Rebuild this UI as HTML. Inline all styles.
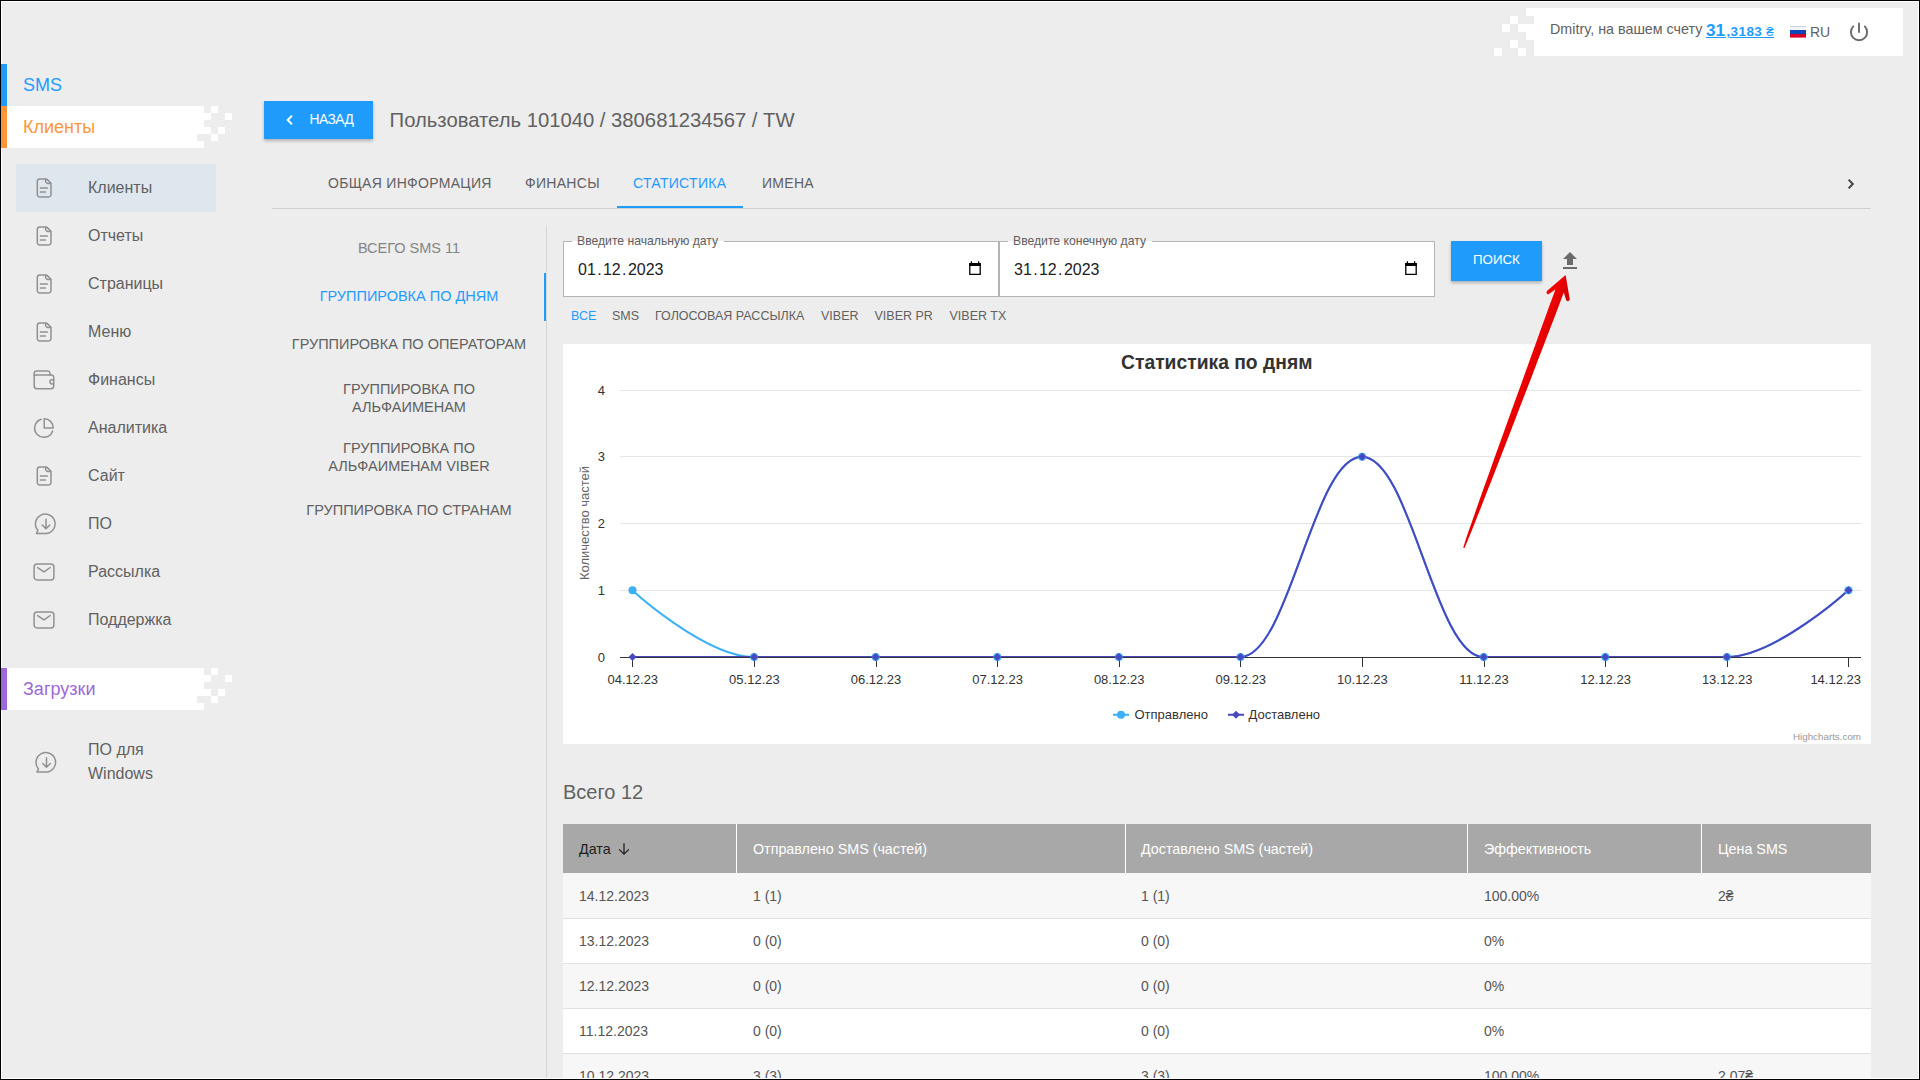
<!DOCTYPE html>
<html><head><meta charset="utf-8">
<style>
*{box-sizing:border-box;margin:0;padding:0}
html,body{width:1920px;height:1080px;overflow:hidden}
body{background:#ededed;font-family:"Liberation Sans",sans-serif;position:relative;color:#616161}
.a{position:absolute;white-space:nowrap}
.t{position:absolute;white-space:nowrap;height:20px;line-height:20px}
.frame{position:absolute;left:0;top:0;width:1920px;height:1080px;border:1px solid #000;pointer-events:none;z-index:50}
.wl{position:absolute;background:#fff;z-index:49}
.px{position:absolute;background:#fff}
.nav{font-size:16px;color:#616161;left:88px}
.ico{position:absolute;left:28px;width:32px;height:32px}
.tab{font-size:14px;letter-spacing:0.3px;color:#616161}
.vt{font-size:14.5px;color:#616161;text-align:center;width:276px;left:271px}
.chip{font-size:12.5px;color:#616161}
.th{font-size:14.3px;color:#fff}
.td{font-size:14px;color:#555}
.dt{margin:0 1.35px}
</style></head><body>
<div class="frame"></div>
<div class="wl" style="left:1px;top:1px;width:1918px;height:1px"></div>
<div class="wl" style="left:1918px;top:1px;width:1px;height:1078px"></div>
<div class="wl" style="left:1px;top:1078px;width:1918px;height:1px"></div>
<div class="a" style="left:1px;top:1px;width:1px;height:1078px;background:#fff"></div>

<!-- ===== SIDEBAR ===== -->
<div class="a" style="left:1px;top:64px;width:6px;height:42px;background:#1f9bfc"></div>
<div class="t" style="left:23px;top:74.75px;font-size:18px;color:#1f9bfc">SMS</div>
<div class="a" style="left:1px;top:106px;width:6px;height:42px;background:#ff973a"></div>
<div class="a" style="left:7px;top:106px;width:197px;height:42px;background:#fff"></div>
<div class="px" style="left:204px;top:113px;width:7px;height:7px"></div>
<div class="px" style="left:204px;top:127px;width:7px;height:7px"></div>
<div class="px" style="left:197px;top:134px;width:7px;height:7px;background:#ededed"></div>
<div class="px" style="left:211px;top:106px;width:7px;height:7px"></div>
<div class="px" style="left:225px;top:113px;width:7px;height:7px"></div>
<div class="px" style="left:218px;top:127px;width:7px;height:7px"></div>
<div class="px" style="left:211px;top:134px;width:7px;height:7px"></div>
<div class="t" style="left:23px;top:116.5px;font-size:18px;color:#ff973a">Клиенты</div>

<div class="a" style="left:16px;top:164px;width:200px;height:48px;background:#dfe7ee"></div>

<div class="t nav" style="top:177.3px;margin-top:0.5px">Клиенты</div>
<div class="t nav" style="top:225.3px;margin-top:0.5px">Отчеты</div>
<div class="t nav" style="top:273.3px;margin-top:0.5px">Страницы</div>
<div class="t nav" style="top:321.3px;margin-top:0.5px">Меню</div>
<div class="t nav" style="top:369.3px;margin-top:0.5px">Финансы</div>
<div class="t nav" style="top:417.3px;margin-top:0.5px">Аналитика</div>
<div class="t nav" style="top:465.3px;margin-top:0.5px">Сайт</div>
<div class="t nav" style="top:513.3px;margin-top:0.5px">ПО</div>
<div class="t nav" style="top:561.3px;margin-top:0.5px">Рассылка</div>
<div class="t nav" style="top:609.3px;margin-top:0.5px">Поддержка</div>

<div class="a" style="left:1px;top:668px;width:6px;height:42px;background:#9d68d8"></div>
<div class="a" style="left:7px;top:668px;width:197px;height:42px;background:#fff"></div>
<div class="px" style="left:204px;top:675px;width:7px;height:7px"></div>
<div class="px" style="left:204px;top:689px;width:7px;height:7px"></div>
<div class="px" style="left:197px;top:696px;width:7px;height:7px;background:#ededed"></div>
<div class="px" style="left:211px;top:668px;width:7px;height:7px"></div>
<div class="px" style="left:225px;top:675px;width:7px;height:7px"></div>
<div class="px" style="left:218px;top:689px;width:7px;height:7px"></div>
<div class="px" style="left:211px;top:696px;width:7px;height:7px"></div>
<div class="t" style="left:23px;top:678.5px;font-size:18px;color:#9d68d8">Загрузки</div>

<div class="t nav" style="top:739.3px;margin-top:0.5px">ПО для</div>
<div class="t nav" style="top:763.5px;margin-top:0.5px">Windows</div>

<!--ICONS-->
<svg class="a" style="left:0;top:0" width="240" height="800" viewBox="0 0 240 800" fill="none" stroke="#919191" stroke-width="1.5" stroke-linecap="round" stroke-linejoin="round">
<g transform="translate(28 170)"><path d="M17.8 8.9H11.8A2.5 2.5 0 0 0 9.3 11.4V24.4A2.5 2.5 0 0 0 11.8 26.9H20.5A2.5 2.5 0 0 0 23 24.4V14.3Q23 13.3 22.3 12.6L19.3 9.6Q18.6 8.9 17.8 8.9Z"/><path d="M17.6 9.2V11.1A2.4 2.4 0 0 0 20 13.5H22.8"/><path d="M12.4 17.9H19.4M12.4 21.9H17.4"/></g>
<g transform="translate(28 218)"><path d="M17.8 8.9H11.8A2.5 2.5 0 0 0 9.3 11.4V24.4A2.5 2.5 0 0 0 11.8 26.9H20.5A2.5 2.5 0 0 0 23 24.4V14.3Q23 13.3 22.3 12.6L19.3 9.6Q18.6 8.9 17.8 8.9Z"/><path d="M17.6 9.2V11.1A2.4 2.4 0 0 0 20 13.5H22.8"/><path d="M12.4 17.9H19.4M12.4 21.9H17.4"/></g>
<g transform="translate(28 266)"><path d="M17.8 8.9H11.8A2.5 2.5 0 0 0 9.3 11.4V24.4A2.5 2.5 0 0 0 11.8 26.9H20.5A2.5 2.5 0 0 0 23 24.4V14.3Q23 13.3 22.3 12.6L19.3 9.6Q18.6 8.9 17.8 8.9Z"/><path d="M17.6 9.2V11.1A2.4 2.4 0 0 0 20 13.5H22.8"/><path d="M12.4 17.9H19.4M12.4 21.9H17.4"/></g>
<g transform="translate(28 314)"><path d="M17.8 8.9H11.8A2.5 2.5 0 0 0 9.3 11.4V24.4A2.5 2.5 0 0 0 11.8 26.9H20.5A2.5 2.5 0 0 0 23 24.4V14.3Q23 13.3 22.3 12.6L19.3 9.6Q18.6 8.9 17.8 8.9Z"/><path d="M17.6 9.2V11.1A2.4 2.4 0 0 0 20 13.5H22.8"/><path d="M12.4 17.9H19.4M12.4 21.9H17.4"/></g>
<g transform="translate(28 362)"><path d="M6.2 13V24A2.8 2.8 0 0 0 9 26.8H22.9A2.8 2.8 0 0 0 25.7 24V15.2A2.2 2.2 0 0 0 23.5 13H6.2"/><path d="M6.2 13V11.1A2.2 2.2 0 0 1 8.4 8.9H19.7A2.2 2.2 0 0 1 21.9 11.1V13"/><path d="M25.7 17.8H24A2.05 2.05 0 0 0 24 21.9H25.7"/></g>
<g transform="translate(28 410)"><path d="M13.2 9.3A9.2 9.2 0 1 0 24.6 20.9"/><path d="M16.2 8.7V17.9H25.2A9 9.2 0 0 0 16.2 8.7Z"/></g>
<g transform="translate(28 458)"><path d="M17.8 8.9H11.8A2.5 2.5 0 0 0 9.3 11.4V24.4A2.5 2.5 0 0 0 11.8 26.9H20.5A2.5 2.5 0 0 0 23 24.4V14.3Q23 13.3 22.3 12.6L19.3 9.6Q18.6 8.9 17.8 8.9Z"/><path d="M17.6 9.2V11.1A2.4 2.4 0 0 0 20 13.5H22.8"/><path d="M12.4 17.9H19.4M12.4 21.9H17.4"/></g>
<g transform="translate(28 506)"><path d="M18 27.6H8.4L10 24.4A9.8 9.8 0 1 1 18 27.6Z"/><path d="M18 13.3V22.4M14.2 19L18 22.7L21.8 19"/></g>
<g transform="translate(28 554)"><rect x="6.1" y="10" width="19.8" height="15.9" rx="3"/><path d="M9.6 13.7L16 17.9L22.2 13.5"/></g>
<g transform="translate(28 602)"><rect x="6.1" y="10" width="19.8" height="15.9" rx="3"/><path d="M9.6 13.7L16 17.9L22.2 13.5"/></g>
<g transform="translate(28.5 744.5)"><path d="M18 27.6H8.4L10 24.4A9.8 9.8 0 1 1 18 27.6Z"/><path d="M18 13.3V22.4M14.2 19L18 22.7L21.8 19"/></g>
</svg>
<!--/ICONS-->

<!-- ===== TOP HEADER ===== -->
<div class="a" style="left:1534px;top:8px;width:369px;height:48px;background:#fff"></div>
<div class="px" style="left:1526px;top:8px;width:8px;height:8px"></div>
<div class="px" style="left:1510px;top:16px;width:8px;height:8px"></div>
<div class="px" style="left:1502px;top:24px;width:8px;height:8px"></div>
<div class="px" style="left:1518px;top:24px;width:16px;height:8px"></div>
<div class="px" style="left:1526px;top:32px;width:8px;height:8px"></div>
<div class="px" style="left:1510px;top:40px;width:8px;height:8px"></div>
<div class="px" style="left:1494px;top:48px;width:8px;height:8px"></div>
<div class="px" style="left:1518px;top:48px;width:8px;height:8px"></div>
<div class="t" style="left:1550px;top:19.2px;font-size:14.3px;color:#616161">Dmitry, на вашем счету</div>
<div class="a" style="left:1706px;top:19px;height:24px;line-height:24px;font-weight:700;color:#1f9bfc"><span style="font-size:17px;margin-right:1.5px">31</span><span style="font-size:13.5px;letter-spacing:0.4px">,3183 </span><span style="font-size:13.5px;font-weight:400">₴</span></div>
<div class="a" style="left:1706px;top:37px;width:20px;height:1px;background:#1f9bfc"></div><div class="a" style="left:1730px;top:37px;width:44px;height:1px;background:#1f9bfc"></div>
<svg class="a" style="left:1790px;top:26px" width="16" height="12" viewBox="0 0 16 12"><rect x="0" y="0" width="16" height="4" fill="#f4f4f4"/><rect x="0" y="0" width="16" height="1" fill="#c9d6e6"/><rect x="0" y="4" width="16" height="4" fill="#0d47b8"/><rect x="0" y="8" width="16" height="3.6" fill="#d8002b"/></svg>
<div class="t" style="left:1810px;top:22px;font-size:14px;color:#616161">RU</div>
<svg class="a" style="left:1845px;top:15px" width="30" height="30" viewBox="0 0 30 30" fill="none" stroke="#6a6a6a" stroke-width="1.9" stroke-linecap="round"><path d="M14 8.5V17"/><path d="M8.3 11.4A8.1 8.1 0 1 0 19.8 11.4"/></svg>

<!-- ===== CONTENT ===== -->
<div class="a" style="left:264px;top:101px;width:109px;height:38px;background:#1f9bfc;box-shadow:0 2px 3px rgba(0,0,0,.25)"></div>
<div class="t" style="left:309.5px;top:110px;font-size:13.8px;letter-spacing:-0.5px;color:#fff">НАЗАД</div>
<svg class="a" style="left:280px;top:110px" width="20" height="20" viewBox="0 0 20 20" fill="none" stroke="#fff" stroke-width="2" stroke-linecap="butt"><path d="M12 5.6L7.7 10L12 14.4"/></svg>
<div class="t" style="left:389.6px;top:109.5px;font-size:20.25px;color:#616161;height:20px">Пользователь 101040 / 380681234567 / TW</div>

<div class="t tab" style="left:328px;top:172.9px">ОБЩАЯ ИНФОРМАЦИЯ</div>
<div class="t tab" style="left:525px;top:172.9px">ФИНАНСЫ</div>
<div class="t tab" style="left:633px;top:172.9px;color:#1f9bfc">СТАТИСТИКА</div>
<div class="t tab" style="left:762px;top:172.9px">ИМЕНА</div>
<div class="a" style="left:272px;top:208px;width:1599px;height:1px;background:#d0d0d0"></div>
<div class="a" style="left:617px;top:206px;width:126px;height:2px;background:#1f9bfc"></div>
<svg class="a" style="left:1840px;top:174px" width="20" height="20" viewBox="0 0 20 20" fill="none" stroke="#444" stroke-width="2" stroke-linecap="butt"><path d="M8.6 5.6L12.8 10L8.6 14.4"/></svg>

<!-- vertical tabs -->
<div class="a" style="left:546px;top:225px;width:1px;height:855px;background:#d6d6d6"></div>
<div class="a" style="left:544px;top:273px;width:2px;height:48px;background:#1f9bfc"></div>
<div class="t vt" style="top:238.1px;color:#858585">ВСЕГО SMS 11</div>
<div class="t vt" style="top:286px;color:#1f9bfc">ГРУППИРОВКА ПО ДНЯМ</div>
<div class="t vt" style="top:334.1px">ГРУППИРОВКА ПО ОПЕРАТОРАМ</div>
<div class="t vt" style="top:379.4px">ГРУППИРОВКА ПО</div>
<div class="t vt" style="top:396.9px">АЛЬФАИМЕНАМ</div>
<div class="t vt" style="top:438.4px">ГРУППИРОВКА ПО</div>
<div class="t vt" style="top:456px">АЛЬФАИМЕНАМ VIBER</div>
<div class="t vt" style="top:499.8px">ГРУППИРОВКА ПО СТРАНАМ</div>

<!-- date inputs -->
<div class="a" style="left:563px;top:241px;width:436px;height:56px;background:#fff;border:1px solid #b4b4b4"></div>
<div class="a" style="left:999px;top:241px;width:436px;height:56px;background:#fff;border:1px solid #b4b4b4"></div>

<!-- search -->
<div class="a" style="left:1451px;top:241px;width:91px;height:40px;background:#1f9bfc;box-shadow:0 2px 3px rgba(0,0,0,.25)"></div>
<div class="t" style="left:1473px;top:250px;font-size:13.3px;color:#fff">ПОИСК</div>
<svg class="a" style="left:1558px;top:249px" width="24" height="24" viewBox="0 0 24 24"><path d="M9 16h6v-6h4l-7-7-7 7h4zm-4 2h14v2H5z" fill="#6b6b6b"/></svg>

<!-- date input contents -->
<div class="a" style="left:572px;top:241px;width:152px;height:1px;background:#fff"></div>
<div class="t" style="left:577px;top:230.75px;font-size:12.2px;color:#616161">Введите начальную дату</div>
<div class="t" style="left:578px;top:260px;font-size:16px;color:#212121">01<span class="dt">.</span>12<span class="dt">.</span>2023</div>
<svg class="a" style="left:968px;top:260px" width="14" height="16" viewBox="0 0 14 16"><path d="M1.8 3.6H12.2V14.4H1.8Z" fill="none" stroke="#000" stroke-width="1.3"/><rect x="1.2" y="3" width="11.6" height="3" fill="#000"/><path d="M3.4 1.2V3.4M10.6 1.2V3.4" stroke="#000" stroke-width="1.3"/></svg>
<div class="a" style="left:1008px;top:241px;width:144px;height:1px;background:#fff"></div>
<div class="t" style="left:1013px;top:230.75px;font-size:12.2px;color:#616161">Введите конечную дату</div>
<div class="t" style="left:1014px;top:260px;font-size:16px;color:#212121">31<span class="dt">.</span>12<span class="dt">.</span>2023</div>
<svg class="a" style="left:1404px;top:260px" width="14" height="16" viewBox="0 0 14 16"><path d="M1.8 3.6H12.2V14.4H1.8Z" fill="none" stroke="#000" stroke-width="1.3"/><rect x="1.2" y="3" width="11.6" height="3" fill="#000"/><path d="M3.4 1.2V3.4M10.6 1.2V3.4" stroke="#000" stroke-width="1.3"/></svg>

<!-- chips -->
<div class="t chip" style="left:571px;top:305.6px;color:#1f9bfc">ВСЕ</div>
<div class="t chip" style="left:612px;top:305.6px">SMS</div>
<div class="t chip" style="left:655px;top:305.6px">ГОЛОСОВАЯ РАССЫЛКА</div>
<div class="t chip" style="left:821px;top:305.6px">VIBER</div>
<div class="t chip" style="left:874.5px;top:305.6px">VIBER PR</div>
<div class="t chip" style="left:949.5px;top:305.6px">VIBER TX</div>

<!-- chart panel -->
<div class="a" style="left:563px;top:344px;width:1308px;height:400px;background:#fff"></div>

<!--CHART-->
<svg class="a" style="left:563px;top:344px" width="1308" height="400" viewBox="0 0 1308 400" font-family="Liberation Sans, sans-serif">
<text x="653.75" y="25" text-anchor="middle" font-size="19.3" font-weight="700" fill="#333">Статистика по дням</text>
<rect x="57" y="46" width="1241" height="1" fill="#e6e6e6"/>
<rect x="57" y="112" width="1241" height="1" fill="#e6e6e6"/>
<rect x="57" y="179" width="1241" height="1" fill="#e6e6e6"/>
<rect x="57" y="246" width="1241" height="1" fill="#e6e6e6"/>
<text x="42" y="50.7" text-anchor="end" font-size="13" fill="#333">4</text>
<text x="42" y="116.7" text-anchor="end" font-size="13" fill="#333">3</text>
<text x="42" y="183.7" text-anchor="end" font-size="13" fill="#333">2</text>
<text x="42" y="250.7" text-anchor="end" font-size="13" fill="#333">1</text>
<text x="42" y="317.7" text-anchor="end" font-size="13" fill="#333">0</text>
<text transform="translate(25.5 179) rotate(-90)" x="0" y="0" text-anchor="middle" font-size="13" fill="#666">Количество частей</text>
<path d="M69.3 246.2 C69.3 246.2 142.3 313.0 190.9 313.0 C239.5 313.0 263.9 313.0 312.5 313.0 C361.1 313.0 385.5 313.0 434.1 313.0 C482.7 313.0 507.1 313.0 555.7 313.0 C604.3 313.0 628.7 313.0 677.3 313.0 C725.9 313.0 750.3 112.8 798.9 112.8 C847.5 112.8 871.9 313.0 920.5 313.0 C969.1 313.0 993.5 313.0 1042.1 313.0 C1090.7 313.0 1115.1 313.0 1163.7 313.0 C1212.3 313.0 1285.3 246.2 1285.3 246.2" fill="none" stroke="#3cb0f7" stroke-width="2"/>
<path d="M69.3 313.0 C69.3 313.0 142.3 313.0 190.9 313.0 C239.5 313.0 263.9 313.0 312.5 313.0 C361.1 313.0 385.5 313.0 434.1 313.0 C482.7 313.0 507.1 313.0 555.7 313.0 C604.3 313.0 628.7 313.0 677.3 313.0 C725.9 313.0 750.3 112.8 798.9 112.8 C847.5 112.8 871.9 313.0 920.5 313.0 C969.1 313.0 993.5 313.0 1042.1 313.0 C1090.7 313.0 1115.1 313.0 1163.7 313.0 C1212.3 313.0 1285.3 246.2 1285.3 246.2" fill="none" stroke="#4a48c0" stroke-width="2"/>
<rect x="57" y="313" width="1241" height="1" fill="#333"/>
<rect x="69" y="313" width="1" height="10" fill="#333"/>
<text x="69.8" y="340" text-anchor="middle" font-size="13" fill="#333">04.12.23</text>
<rect x="191" y="313" width="1" height="10" fill="#333"/>
<text x="191.4" y="340" text-anchor="middle" font-size="13" fill="#333">05.12.23</text>
<rect x="313" y="313" width="1" height="10" fill="#333"/>
<text x="313.0" y="340" text-anchor="middle" font-size="13" fill="#333">06.12.23</text>
<rect x="434" y="313" width="1" height="10" fill="#333"/>
<text x="434.6" y="340" text-anchor="middle" font-size="13" fill="#333">07.12.23</text>
<rect x="556" y="313" width="1" height="10" fill="#333"/>
<text x="556.2" y="340" text-anchor="middle" font-size="13" fill="#333">08.12.23</text>
<rect x="677" y="313" width="1" height="10" fill="#333"/>
<text x="677.8" y="340" text-anchor="middle" font-size="13" fill="#333">09.12.23</text>
<rect x="799" y="313" width="1" height="10" fill="#333"/>
<text x="799.4" y="340" text-anchor="middle" font-size="13" fill="#333">10.12.23</text>
<rect x="921" y="313" width="1" height="10" fill="#333"/>
<text x="921.0" y="340" text-anchor="middle" font-size="13" fill="#333">11.12.23</text>
<rect x="1042" y="313" width="1" height="10" fill="#333"/>
<text x="1042.6" y="340" text-anchor="middle" font-size="13" fill="#333">12.12.23</text>
<rect x="1164" y="313" width="1" height="10" fill="#333"/>
<text x="1164.2" y="340" text-anchor="middle" font-size="13" fill="#333">13.12.23</text>
<rect x="1285" y="313" width="1" height="10" fill="#333"/>
<text x="1298" y="340" text-anchor="end" font-size="13" fill="#333">14.12.23</text>
<circle cx="69.5" cy="246.2" r="4" fill="#3cb0f7"/>
<circle cx="191.1" cy="313.0" r="4" fill="#3cb0f7"/>
<circle cx="312.7" cy="313.0" r="4" fill="#3cb0f7"/>
<circle cx="434.3" cy="313.0" r="4" fill="#3cb0f7"/>
<circle cx="555.9" cy="313.0" r="4" fill="#3cb0f7"/>
<circle cx="677.5" cy="313.0" r="4" fill="#3cb0f7"/>
<circle cx="799.1" cy="112.8" r="4" fill="#3cb0f7"/>
<circle cx="920.7" cy="313.0" r="4" fill="#3cb0f7"/>
<circle cx="1042.3" cy="313.0" r="4" fill="#3cb0f7"/>
<circle cx="1163.9" cy="313.0" r="4" fill="#3cb0f7"/>
<circle cx="1285.5" cy="246.2" r="4" fill="#3cb0f7"/>
<path d="M69.5 309.0 L73.5 313.0 L69.5 317.0 L65.5 313.0Z" fill="#4a48c0"/>
<path d="M191.1 309.0 L195.1 313.0 L191.1 317.0 L187.1 313.0Z" fill="#4a48c0"/>
<path d="M312.7 309.0 L316.7 313.0 L312.7 317.0 L308.7 313.0Z" fill="#4a48c0"/>
<path d="M434.3 309.0 L438.3 313.0 L434.3 317.0 L430.3 313.0Z" fill="#4a48c0"/>
<path d="M555.9 309.0 L559.9 313.0 L555.9 317.0 L551.9 313.0Z" fill="#4a48c0"/>
<path d="M677.5 309.0 L681.5 313.0 L677.5 317.0 L673.5 313.0Z" fill="#4a48c0"/>
<path d="M799.1 108.8 L803.1 112.8 L799.1 116.8 L795.1 112.8Z" fill="#4a48c0"/>
<path d="M920.7 309.0 L924.7 313.0 L920.7 317.0 L916.7 313.0Z" fill="#4a48c0"/>
<path d="M1042.3 309.0 L1046.3 313.0 L1042.3 317.0 L1038.3 313.0Z" fill="#4a48c0"/>
<path d="M1163.9 309.0 L1167.9 313.0 L1163.9 317.0 L1159.9 313.0Z" fill="#4a48c0"/>
<path d="M1285.5 242.2 L1289.5 246.2 L1285.5 250.2 L1281.5 246.2Z" fill="#4a48c0"/>
<rect x="550" y="369.75" width="16" height="2" fill="#3cb0f7"/>
<circle cx="558" cy="370.75" r="4" fill="#3cb0f7"/>
<text x="571.5" y="375" font-size="13" fill="#333">Отправлено</text>
<rect x="665" y="369.75" width="16" height="2" fill="#4a48c0"/>
<path d="M673 366.75 L677 370.75 L673 374.75 L669 370.75Z" fill="#4a48c0"/>
<text x="685.5" y="375" font-size="13" fill="#333">Доставлено</text>
<text x="1298" y="395.5" text-anchor="end" font-size="9.8" fill="#999">Highcharts.com</text>
</svg>
<!--/CHART-->

<!-- total -->
<div class="t" style="left:563px;top:781.7px;font-size:20px;color:#616161">Всего 12</div>

<!-- table -->
<div class="a" style="left:563px;top:824px;width:1308px;height:256px;background:#fff"></div>
<div class="a" style="left:563px;top:824px;width:1308px;height:49px;background:#a8a8a8"></div>
<div class="a" style="left:736px;top:824px;width:1px;height:49px;background:#fff"></div>
<div class="a" style="left:1125px;top:824px;width:1px;height:49px;background:#fff"></div>
<div class="a" style="left:1467px;top:824px;width:1px;height:49px;background:#fff"></div>
<div class="a" style="left:1701px;top:824px;width:1px;height:49px;background:#fff"></div>
<div class="t th" style="left:579px;top:839px;color:#212121">Дата</div>
<svg class="a" style="left:615px;top:840px" width="18" height="18" viewBox="0 0 18 18" fill="none" stroke="#212121" stroke-width="1.3"><path d="M9 3.2V14.2M4.2 9.4L9 14.2L13.8 9.4"/></svg>
<div class="t th" style="left:753px;top:839px">Отправлено SMS (частей)</div>
<div class="t th" style="left:1141px;top:839px">Доставлено SMS (частей)</div>
<div class="t th" style="left:1484px;top:839px">Эффективность</div>
<div class="t th" style="left:1718px;top:839px">Цена SMS</div>
<div class="a" style="left:563px;top:873px;width:1308px;height:45px;background:#f7f7f7"></div><div class="a" style="left:563px;top:918px;width:1308px;height:1px;background:#e0e0e0"></div>
<div class="t td" style="left:579px;top:886.1px">14.12.2023</div>
<div class="t td" style="left:753px;top:886.1px">1 (1)</div>
<div class="t td" style="left:1141px;top:886.1px">1 (1)</div>
<div class="t td" style="left:1484px;top:886.1px">100.00%</div>
<div class="t td" style="left:1718px;top:886.1px">2₴</div>
<div class="a" style="left:563px;top:919px;width:1308px;height:44px;background:#fff"></div><div class="a" style="left:563px;top:963px;width:1308px;height:1px;background:#e0e0e0"></div>
<div class="t td" style="left:579px;top:931.1px">13.12.2023</div>
<div class="t td" style="left:753px;top:931.1px">0 (0)</div>
<div class="t td" style="left:1141px;top:931.1px">0 (0)</div>
<div class="t td" style="left:1484px;top:931.1px">0%</div>
<div class="a" style="left:563px;top:964px;width:1308px;height:44px;background:#f7f7f7"></div><div class="a" style="left:563px;top:1008px;width:1308px;height:1px;background:#e0e0e0"></div>
<div class="t td" style="left:579px;top:976.1px">12.12.2023</div>
<div class="t td" style="left:753px;top:976.1px">0 (0)</div>
<div class="t td" style="left:1141px;top:976.1px">0 (0)</div>
<div class="t td" style="left:1484px;top:976.1px">0%</div>
<div class="a" style="left:563px;top:1009px;width:1308px;height:44px;background:#fff"></div><div class="a" style="left:563px;top:1053px;width:1308px;height:1px;background:#e0e0e0"></div>
<div class="t td" style="left:579px;top:1021.1px">11.12.2023</div>
<div class="t td" style="left:753px;top:1021.1px">0 (0)</div>
<div class="t td" style="left:1141px;top:1021.1px">0 (0)</div>
<div class="t td" style="left:1484px;top:1021.1px">0%</div>
<div class="a" style="left:563px;top:1054px;width:1308px;height:44px;background:#f7f7f7"></div><div class="a" style="left:563px;top:1098px;width:1308px;height:1px;background:#e0e0e0"></div>
<div class="t td" style="left:579px;top:1066.1px">10.12.2023</div>
<div class="t td" style="left:753px;top:1066.1px">3 (3)</div>
<div class="t td" style="left:1141px;top:1066.1px">3 (3)</div>
<div class="t td" style="left:1484px;top:1066.1px">100.00%</div>
<div class="t td" style="left:1718px;top:1066.1px">2.07₴</div>

<!--ARROW-->
<svg class="a" style="left:0;top:0;z-index:40" width="1920" height="1080" viewBox="0 0 1920 1080">
<defs><linearGradient id="rg" gradientUnits="userSpaceOnUse" x1="1541.4" y1="327.9" x2="1552.6" y2="332.1"><stop offset="0" stop-color="#f40000"/><stop offset="1" stop-color="#d40000"/></linearGradient></defs>
<path d="M1565.6 275.0 L1547.5 290.5 Q1545.3 293.1 1548.0 294.4 L1555.4 289.4 L1552.3 298.0 L1549.1 306.6 L1546.0 315.2 L1542.9 323.8 L1539.8 332.3 L1536.7 340.9 L1533.6 349.5 L1530.5 358.1 L1527.4 366.7 L1524.3 375.3 L1521.2 383.9 L1518.1 392.5 L1515.0 401.0 L1511.9 409.6 L1508.8 418.2 L1505.7 426.8 L1502.6 435.4 L1499.5 444.0 L1496.4 452.6 L1493.3 461.2 L1490.3 469.8 L1487.2 478.4 L1484.1 487.0 L1481.1 495.6 L1478.0 504.2 L1475.0 512.9 L1472.0 521.5 L1469.0 530.1 L1466.0 538.8 L1463.3 547.5 L1463.9 548.0 L1464.5 547.9 L1468.1 539.5 L1471.6 531.1 L1475.0 522.6 L1478.3 514.1 L1481.7 505.6 L1485.0 497.1 L1488.3 488.6 L1491.7 480.1 L1495.0 471.6 L1498.3 463.1 L1501.6 454.5 L1504.9 446.0 L1508.2 437.5 L1511.5 429.0 L1514.8 420.5 L1518.0 411.9 L1521.3 403.4 L1524.6 394.9 L1527.9 386.4 L1531.2 377.9 L1534.5 369.3 L1537.7 360.8 L1541.0 352.3 L1544.3 343.8 L1547.5 335.2 L1550.8 326.7 L1554.1 318.2 L1557.4 309.6 L1560.6 301.1 L1563.8 292.6 L1566.2 300.3 Q1568.3 302.7 1569.8 299.5 Z" fill="url(#rg)"/>
</svg>
<!--/ARROW-->
</body></html>
